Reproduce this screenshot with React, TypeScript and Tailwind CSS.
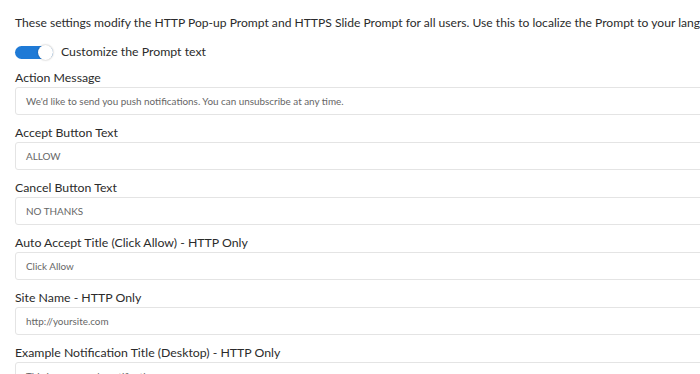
import React from "react";

const fields = [
  { label: "Action Message", value: "We'd like to send you push notifications. You can unsubscribe at any time." },
  { label: "Accept Button Text", value: "ALLOW" },
  { label: "Cancel Button Text", value: "NO THANKS" },
  { label: "Auto Accept Title (Click Allow) - HTTP Only", value: "Click Allow" },
  { label: "Site Name - HTTP Only", value: "http://yoursite.com" },
  { label: "Example Notification Title (Desktop) - HTTP Only", value: "This is an example notification" },
];

export default function App() {
  return (
    <div className="w-[700px] h-[374px] overflow-hidden bg-white" style={{ fontFamily: "Lato, 'Open Sans', sans-serif" }}>
      <div className="w-[800px] pl-[15px] pt-[14px]">
        <p className="whitespace-nowrap text-[12.1px] leading-[17px] text-[#2b2b2b]">
          These settings modify the HTTP Pop-up Prompt and HTTPS Slide Prompt for all users. Use this to localize the Prompt to your language.
        </p>
        <div className="mt-[13px] flex items-center h-[16px]">
          <div className="relative w-[38px] h-[13px] rounded-full bg-[#1f7ad6]">
            <div className="absolute right-0 top-[-1px] w-[15px] h-[15px] rounded-full bg-white shadow-[0_0_2px_rgba(0,0,0,0.35)]" />
          </div>
          <span className="ml-[8px] text-[12.3px] text-[#2b2b2b]">Customize the Prompt text</span>
        </div>
        <div className="mt-[10px] flex flex-col">
          {fields.map((f) => (
            <div key={f.label} className="mb-[10px]">
              <div className="text-[12.3px] leading-[16px] text-[#2b2b2b]">{f.label}</div>
              <div className="mt-[1px] h-[28px] rounded-[3px] border border-[#e4e4e4] flex items-center pl-[10px] text-[9.9px] text-[#666]">
                {f.value}
              </div>
            </div>
          ))}
        </div>
      </div>
    </div>
  );
}
